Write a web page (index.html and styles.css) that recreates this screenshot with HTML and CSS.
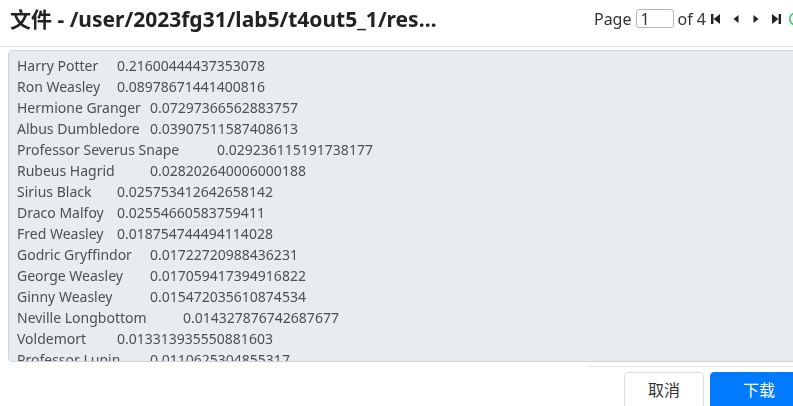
FILE: index.html
```html
<!DOCTYPE html>
<html lang="zh">
<head>
<meta charset="utf-8">
<title>文件</title>
<link rel="stylesheet" href="styles.css">
</head>
<body>
<div class="modal">
  <div class="modal-header">
    <h4 class="modal-title">文件 - /user/2023fg31/lab5/t4out5_1/result_part_0001.txt</h4>
    <div class="pager">
      <span class="pager-label">Page</span>
      <input class="pager-input" type="text" value="1">
      <span class="pager-label">of 4</span>
      <button class="pager-btn" aria-label="first"><svg width="10" height="10" viewBox="0 0 10 10"><rect x="0" y="0" width="2.4" height="10" fill="#222"/><polygon points="9,0 9,10 2.6,5" fill="#222"/></svg></button>
      <button class="pager-btn" aria-label="prev"><svg width="6" height="8" viewBox="0 0 6 8"><polygon points="5.5,0 5.5,8 0.5,4" fill="#222"/></svg></button>
      <button class="pager-btn" aria-label="next"><svg width="6" height="8" viewBox="0 0 6 8"><polygon points="0.5,0 0.5,8 5.5,4" fill="#222"/></svg></button>
      <button class="pager-btn" aria-label="last"><svg width="10" height="10" viewBox="0 0 10 10"><polygon points="1,0 1,10 7.4,5" fill="#222"/><rect x="7.6" y="0" width="2.4" height="10" fill="#222"/></svg></button>
      <button class="pager-btn refresh" aria-label="refresh"><svg width="14" height="14" viewBox="0 0 14 14"><path d="M11.5 3.2 A6 6 0 1 0 12.8 7.4" fill="none" stroke="#2bd05a" stroke-width="1.6"/><polygon points="9.5,1.5 13.2,1.2 12.4,5" fill="#2bd05a"/></svg></button>
    </div>
  </div>
  <div class="modal-body">
    <div class="file-content">
      <div class="line"><span class="key t1">Harry Potter</span><span>0.21600444437353078</span></div>
      <div class="line"><span class="key t1">Ron Weasley</span><span>0.08978671441400816</span></div>
      <div class="line"><span class="key t2">Hermione Granger</span><span>0.07297366562883757</span></div>
      <div class="line"><span class="key t2">Albus Dumbledore</span><span>0.03907511587408613</span></div>
      <div class="line"><span class="key t4">Professor Severus Snape</span><span>0.029236115191738177</span></div>
      <div class="line"><span class="key t2">Rubeus Hagrid</span><span>0.028202640006000188</span></div>
      <div class="line"><span class="key t1">Sirius Black</span><span>0.025753412642658142</span></div>
      <div class="line"><span class="key t1">Draco Malfoy</span><span>0.02554660583759411</span></div>
      <div class="line"><span class="key t1">Fred Weasley</span><span>0.018754744494114028</span></div>
      <div class="line"><span class="key t2">Godric Gryffindor</span><span>0.01722720988436231</span></div>
      <div class="line"><span class="key t2">George Weasley</span><span>0.017059417394916822</span></div>
      <div class="line"><span class="key t2">Ginny Weasley</span><span>0.015472035610874534</span></div>
      <div class="line"><span class="key t3">Neville Longbottom</span><span>0.014327876742687677</span></div>
      <div class="line"><span class="key t1">Voldemort</span><span>0.013313935550881603</span></div>
      <div class="line"><span class="key t2">Professor Lupin</span><span>0.0110625304855317</span></div>
      <div class="line"><span class="key t2">Dudley Dursley</span><span>0.010734525861325102</span></div>
      <div class="line"><span class="key t2">Luna Lovegood</span><span>0.010342186457823981</span></div>
      <div class="line"><span class="key t3">Minerva McGonagall</span><span>0.009871254368220354</span></div>
      <div class="line"><span class="key t2">Cedric Diggory</span><span>0.009412385517604429</span></div>
      <div class="line"><span class="key t2">Peter Pettigrew</span><span>0.008876231549023118</span></div>
      <div class="line"><span class="key t1">Lucius Malfoy</span><span>0.008421963270811643</span></div>
      <div class="line"><span class="key t2">Vernon Dursley</span><span>0.008011457326558701</span></div>
      <div class="line"><span class="key t1">Cho Chang</span><span>0.007654312980346725</span></div>
      <div class="line"><span class="key t2">Percy Weasley</span><span>0.007213548862109935</span></div>
      <div class="line"><span class="key t2">Arthur Weasley</span><span>0.006981245720364417</span></div>
      <div class="line"><span class="key t1">Dobby</span><span>0.006542871103287665</span></div>
      <div class="line"><span class="key t2">Petunia Dursley</span><span>0.006120458731954302</span></div>
      <div class="line"><span class="key t1">Oliver Wood</span><span>0.005873301465826519</span></div>
      <div class="line"><span class="key t2">Seamus Finnigan</span><span>0.005514876290633148</span></div>
      <div class="line"><span class="key t1">Dean Thomas</span><span>0.005230147862214076</span></div>
    </div>
  </div>
  <div class="modal-footer">
    <div class="footer-rule"></div>
    <div class="footer-actions">
      <button class="btn btn-default">取消</button>
      <button class="btn btn-primary">下载</button>
    </div>
  </div>
</div>
</body>
</html>
```
FILE: styles.css
```css
html, body {
  margin: 0;
  padding: 0;
  overflow: hidden;
  background: #fff;
}
body {
  width: 793px;
  height: 406px;
  font-family: "Noto Sans", "Noto Sans CJK SC", sans-serif;
  color: #333;
}
.modal {
  width: 810px;
}
.modal-header {
  border-bottom: 1px solid #e5e5e5;
  display: flex;
  align-items: center;
  padding: 0 2px 0 10px;
  box-sizing: border-box;
  height: 47px;
}
.modal-title {
  margin: 0;
  font-size: 21px;
  font-weight: 700;
  color: #222;
  white-space: nowrap;
  overflow: hidden;
  text-overflow: ellipsis;
  width: 428px;
  line-height: 28px;
  margin-top: -9px;
}
.pager {
  margin-left: auto;
  display: flex;
  align-items: center;
  margin-top: -9px;
}
.pager-label {
  font-size: 16px;
  color: #333;
  line-height: 20px;
}
.pager-input {
  width: 38px;
  height: 19px;
  box-sizing: border-box;
  margin: 0 4px;
  border: 1px solid #b5b5b5;
  border-radius: 3px;
  font-family: inherit;
  font-size: 16px;
  padding: 0 4px;
  color: #333;
  line-height: 17px;
}
.pager-btn {
  width: 20px;
  height: 20px;
  padding: 0;
  border: 0;
  background: transparent;
  display: flex;
  align-items: center;
  justify-content: center;
}
.pager-btn.refresh {
  width: 22px;
  justify-content: flex-start;
  padding-left: 3px;
}
.modal-body {
  padding: 3px 0 0 8px;
}
.file-content {
  width: 797px;
  height: 312px;
  box-sizing: border-box;
  background: #e9ecef;
  border: 1px solid #ced4da;
  border-radius: 4px;
  padding: 4px 8px;
  font-size: 14px;
  line-height: 21px;
  color: #495057;
  overflow-y: scroll;
  overflow-x: hidden;
}
.line {
  display: flex;
  white-space: nowrap;
}
.key {
  flex: none;
}
.t1 { width: 100px; }
.t2 { width: 133px; }
.t3 { width: 166px; }
.t4 { width: 200px; }
.file-content::-webkit-scrollbar {
  width: 15px;
}
.file-content::-webkit-scrollbar-track {
  background: #f1f1f1;
}
.file-content::-webkit-scrollbar-thumb {
  background: #c1c1c1;
  border: 2px solid #f1f1f1;
}
.file-content::-webkit-scrollbar-button:vertical:start:decrement,
.file-content::-webkit-scrollbar-button:vertical:end:increment {
  display: block;
  height: 17px;
  background: #f1f1f1;
}
.modal-footer {
  display: flex;
  flex-direction: column;
}
.footer-rule {
  margin-top: 4px;
  margin-left: 587px;
  border-top: 1px solid #e5e5e5;
}
.footer-actions {
  display: flex;
  justify-content: flex-end;
  gap: 6px;
  padding-top: 5px;
  padding-right: 2px;
}
.btn {
  height: 40px;
  font-family: "Noto Sans CJK SC", sans-serif;
  font-size: 16px;
  border-radius: 4px;
  padding: 0 0 6px;
  cursor: pointer;
}
.btn-default {
  width: 80px;
  background: #fff;
  border: 1px solid #ddd;
  color: #333;
}
.btn-primary {
  width: 98px;
  background: #007bff;
  border: 1px solid #007bff;
  color: #fff;
}
```
